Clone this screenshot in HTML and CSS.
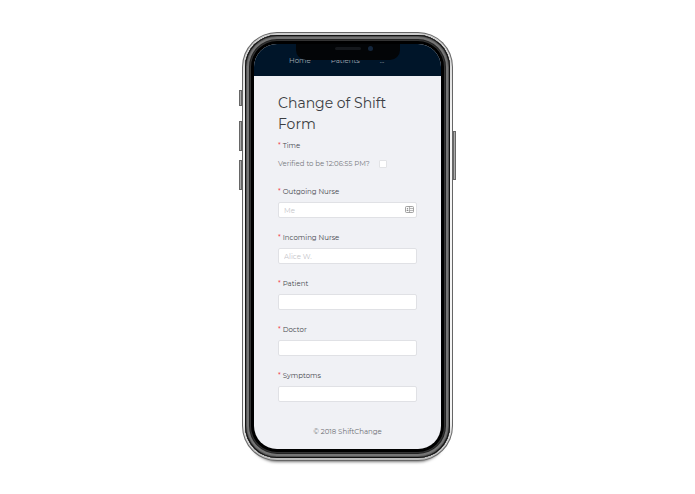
FILE: index.html
```
<!DOCTYPE html>
<html lang="en">
<head>
	<meta charset="UTF-8">
	<meta name="viewport" content="width=device-width, initial-scale=1">
	<title>ShiftChange</title>
	<link rel="stylesheet" href="styles.css">
</head>
<body>
	<div class="phone">
		<span class="key key-mute"></span>
		<span class="key key-up"></span>
		<span class="key key-down"></span>
		<span class="key key-power"></span>
		<div class="rim">
			<div class="bezel">
				<div class="screen">
					<div class="notch"><span class="speaker"></span><span class="camera"></span></div>
					<nav class="nav">
						<a href="#">Home</a>
						<a href="#">Patients</a>
						<a href="#">...</a>
					</nav>
					<main class="content">
						<h1 class="title">Change of Shift Form</h1>
						<form class="form">
							<div class="item">
								<label class="label" for="time">Time</label>
								<div class="verify">
									<span>Verified to be 12:06:55 PM?</span>
									<input id="time" type="checkbox" class="check">
								</div>
							</div>
							<div class="item">
								<label class="label" for="outgoing">Outgoing Nurse</label>
								<div class="field">
									<input id="outgoing" type="text" class="text" placeholder="Me">
									<svg class="card" viewBox="0 0 18 14" aria-hidden="true">
										<rect x="1" y="1" width="16" height="12" rx="2" fill="#fafafa" stroke="#8c8c8c" stroke-width="1.6"/>
										<circle cx="5" cy="5.4" r="1.4" fill="#888"/>
										<path d="M3 10c0-2.6 4-2.6 4 0z" fill="#888"/>
										<path d="M9 1v12M9 5h7M9 9h7" fill="none" stroke="#8c8c8c" stroke-width="1.2"/>
									</svg>
								</div>
							</div>
							<div class="item">
								<label class="label" for="incoming">Incoming Nurse</label>
								<input id="incoming" type="text" class="text" placeholder="Alice W.">
							</div>
							<div class="item">
								<label class="label" for="patient">Patient</label>
								<input id="patient" type="text" class="text">
							</div>
							<div class="item">
								<label class="label" for="doctor">Doctor</label>
								<input id="doctor" type="text" class="text">
							</div>
							<div class="item">
								<label class="label" for="symptoms">Symptoms</label>
								<input id="symptoms" type="text" class="text">
							</div>
						</form>
					</main>
					<footer class="footer">© 2018 ShiftChange</footer>
				</div>
			</div>
		</div>
	</div>
</body>
</html>
```
FILE: styles.css
```
* {box-sizing: border-box; margin: 0; padding: 0;}
body {padding: 32px 0; background: #fff; color: #46484d; font: 7px/12px Montserrat, Inter, sans-serif;}
a {color: inherit; text-decoration: none;}

/* device */
.phone {position: relative; width: max(211px, 30vw); margin: 0 auto; padding: 1px; border-radius: 35px; background: #666; box-shadow: 0 7px 3px -6px #777;}
.rim {padding: 2px; border-radius: 34px; background: linear-gradient(#ccc, #f4f4f4 20%, #f4f4f4 90%, #bbb);}
.bezel {padding: 9px; border-radius: 32px; background: #000; box-shadow: inset 0 0 0 1px #111, inset 0 0 0 2px #555, inset 0 0 0 4px #757575, inset 0 0 0 5px #222, inset 0 0 0 6px #333;}
.key {position: absolute; width: 3px; background: #aaa; border: 1px solid #666;}
.key-mute {left: -3px; top: 58px; height: 16px;}
.key-up {left: -3px; top: 89px; height: 30px;}
.key-down {left: -3px; top: 128px; height: 30px;}
.key-power {right: -3px; top: 99px; height: 49px;}

/* screen */
.screen {position: relative; overflow: hidden; border-radius: 23px; background: #f0f1f5;}
.notch {position: absolute; z-index: 1; top: -1px; left: 50%; width: 104px; height: 17px; transform: translateX(-50%); border-radius: 0 0 10px 10px; background: #030507;}
.speaker {position: absolute; top: 4px; left: 39px; width: 26px; height: 3px; border-radius: 2px; background: #15181c;}
.camera {position: absolute; top: 3px; left: 72px; width: 5px; height: 5px; border-radius: 50%; background: #14263c;}
.nav {display: flex; gap: 20px; padding: 11px 35px 9px; background: #001529; color: #a6adb4; line-height: 12px;}
.content {padding: 17px 24px 0;}
.title {margin-bottom: 5px; font-size: 14px; line-height: 21px; font-weight: 400; color: #3b3d42;}

/* form */
.item {margin-bottom: 14px;}
.label {display: block; margin-bottom: 4px; line-height: 12px;}
.label:before {content: "*"; margin-right: 2px; color: #f5222d;}
.verify {display: flex; align-items: center; gap: 9px; height: 16px; color: #76787d;}
.check {appearance: none; width: 8px; height: 8px; border: 1px solid #e2e3e6; border-radius: 1px; background: #fff;}
.field {position: relative;}
.text {display: block; width: 100%; height: 16px; padding: 0 5px; border: 1px solid #e0e1e5; border-radius: 2px; background: #fff; font: inherit;}
.text::placeholder {color: #c4c4c8;}
.card {position: absolute; top: 4px; right: 3px; width: 9px; height: 7px;}
.footer {padding: 10px 0 11px; text-align: center; color: #6b6d72;}
```
